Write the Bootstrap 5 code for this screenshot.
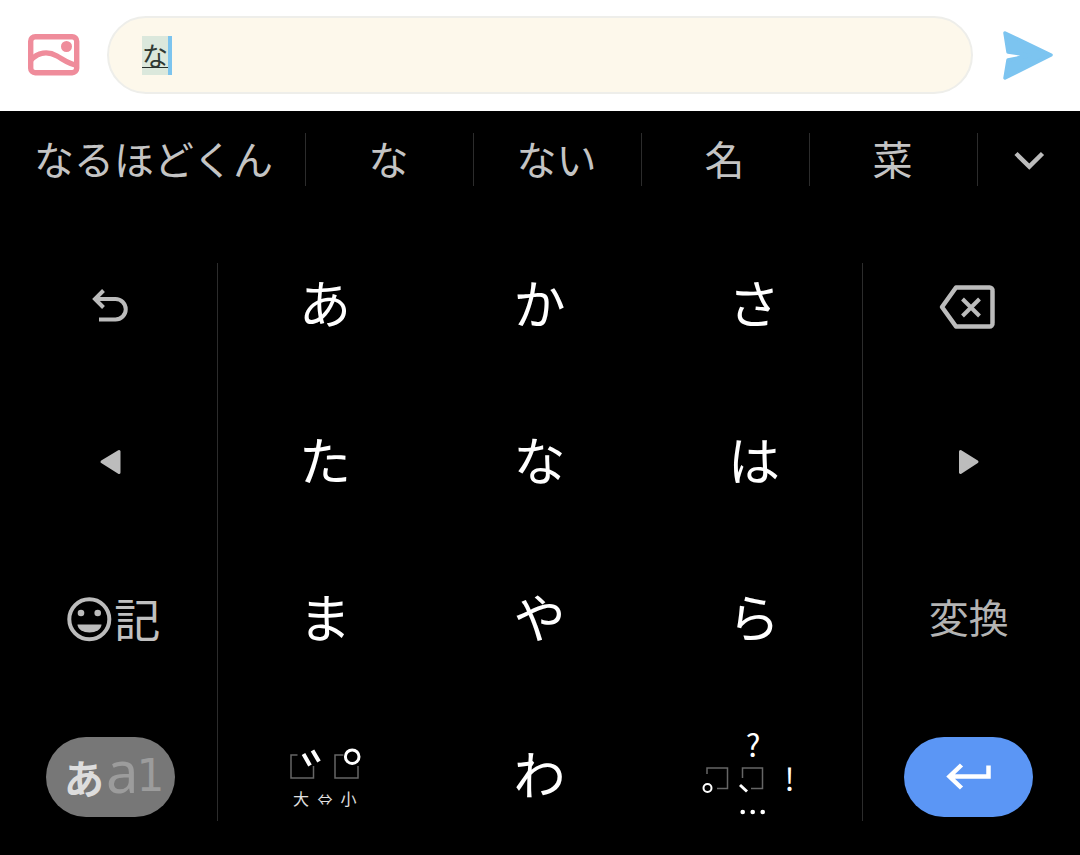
<!doctype html>
<html lang="ja">
<head>
<meta charset="utf-8">
<title>Keyboard</title>
<link href="https://cdn.jsdelivr.net/npm/bootstrap@5.3.0/dist/css/bootstrap.min.css" rel="stylesheet">
<style>
html,body{height:855px;overflow:hidden;background:#000;}
body{font-family:"Noto Sans CJK JP","Noto Sans",sans-serif;}
svg{display:block;flex:none;overflow:visible;}
.top-bar{height:111px;background:#fff;padding:16px 27px 17px 26px;}
.msg-pill{height:78px;margin:0 30px 0 27px;padding-left:33px;background:#fdf8eb;border:2px solid #eeeeea;border-radius:39px;}
.compose{display:block;height:39px;width:26px;background:#dbe8dc;color:#2f3a33;font-size:26px;line-height:37px;text-align:center;}
.compose-under{display:block;height:1.5px;background:#27302b;margin-top:-6px;}
.caret-mark{width:4px;height:39px;background:#7cc4ee;}
.suggest-row{height:115.7px;color:#c4c4c4;font-size:40px;font-weight:400;}
.sug{height:98px;}
.sug-a{width:305px;padding-left:2px;}
.sug-b{width:167px;padding-right:2px;}
.sug-c{flex:1;}
.sug-rule{width:1px;height:53px;background:#2c2c2c;margin:22px 0 0;flex:none;}
.sug-t{line-height:1;margin-top:-4px;white-space:nowrap;}
.key-wrap{height:628.3px;padding:0 4px 0 3px;}
.key-col{flex:1 1 0;display:grid;grid-template-rows:repeat(4,1fr);min-width:0;}
.key-rule{width:1px;margin:36px -.5px 34px;background:#2c2c2c;flex:none;}
.key-rule-end{margin-left:.5px;margin-right:-1.5px;}
.mid-block{flex:3 1 0;display:grid;grid-template-columns:repeat(3,1fr);grid-template-rows:repeat(4,1fr);min-width:0;}
.ky{display:flex;align-items:center;justify-content:center;min-width:0;}
.ky-main{color:#fff;font-size:52px;line-height:1;padding-bottom:7px;}
.ky-side{color:#b4b4b4;font-size:40px;line-height:1;padding-bottom:6px;}
.ky-emoji{padding-left:6px;}
.ki{color:#c0c0c0;font-size:46px;line-height:1;margin-top:-4px;margin-left:2px;}
.pill-key{width:129px;height:80px;border-radius:40px;margin-top:2px;}
.pill-mode{background:#777;line-height:1;padding-left:8px;}
.mode-a{color:#ddd;font-size:40px;font-weight:700;margin-right:2px;}
.mode-b{color:#9c9c9c;font-family:"Noto Sans",sans-serif;font-weight:400;font-size:58px;margin-top:-12px;}
.mode-c{color:#9c9c9c;font-family:"DejaVu Sans",sans-serif;font-weight:400;font-size:44px;margin-top:-2px;margin-left:-2px;}
.pill-enter{background:#5b96f5;}
.svg-txt{font-family:"Noto Sans CJK JP",sans-serif;}
</style>
</head>
<body>
<div class="top-bar d-flex align-items-center">
  <svg width="54" height="44" viewBox="26 34 54 44" aria-label="image">
    <rect x="30.700" y="37.700" width="46" height="36" rx="4.500" fill="none" stroke="#ef8c9b" stroke-width="5.400"/>
    <path d="M30 62C38 53 48 52 57 57C64 61 70 66 77 66" fill="none" stroke="#ef8c9b" stroke-width="5.400"/>
    <circle cx="66.500" cy="47.500" r="5.500" fill="#ef8c9b"/>
  </svg>
  <div class="msg-pill flex-grow-1 d-flex align-items-center">
    <span class="compose">な<span class="compose-under"></span></span><span class="caret-mark"></span>
  </div>
  <svg width="50" height="50" viewBox="1003 30 50 50" aria-label="send">
    <path d="M1005 33L1051 55L1005 78L1008 60L1030 55.500L1008 52Z" fill="#7cc4f0" stroke="#7cc4f0" stroke-width="3.500" stroke-linejoin="round"/>
  </svg>
</div>

<div class="suggest-row d-flex">
  <div class="sug sug-a d-flex align-items-center justify-content-center"><span class="sug-t">なるほどくん</span></div>
  <div class="sug-rule"></div>
  <div class="sug sug-b d-flex align-items-center justify-content-center"><span class="sug-t">な</span></div>
  <div class="sug-rule"></div>
  <div class="sug sug-b d-flex align-items-center justify-content-center"><span class="sug-t">ない</span></div>
  <div class="sug-rule"></div>
  <div class="sug sug-b d-flex align-items-center justify-content-center"><span class="sug-t">名</span></div>
  <div class="sug-rule"></div>
  <div class="sug sug-b d-flex align-items-center justify-content-center"><span class="sug-t">菜</span></div>
  <div class="sug-rule"></div>
  <div class="sug sug-c d-flex align-items-center justify-content-center">
    <svg width="32" height="18" viewBox="1013 151 32 18" aria-label="more"><path d="M1016 153.500L1029.300 166.500L1042.500 153.500" fill="none" stroke="#bcbcbc" stroke-width="4.500"/></svg>
  </div>
</div>

<div class="key-wrap d-flex">
  <div class="key-col">
    <div class="ky">
      <svg width="40" height="40" viewBox="91 285 40 40" aria-label="undo"><path d="M104.500 290.500L96 299L104.500 307.500M96 299H116.500A10 10 0 0 1 116.500 319.500H100" fill="none" stroke="#bcbcbc" stroke-width="4"/></svg>
    </div>
    <div class="ky">
      <svg width="24" height="28" viewBox="98 448 24 28" aria-label="left"><path d="M102 461.700L119 451.500V472.500Z" fill="#bcbcbc" stroke="#bcbcbc" stroke-width="3" stroke-linejoin="round"/></svg>
    </div>
    <div class="ky ky-emoji">
      <svg width="46" height="46" viewBox="65 596 46 46" aria-label="emoji"><circle cx="88.300" cy="619.300" r="20" fill="none" stroke="#bcbcbc" stroke-width="4"/><circle cx="80" cy="613" r="3.300" fill="#bcbcbc"/><circle cx="96.700" cy="613" r="3.300" fill="#bcbcbc"/><path d="M76.500 624.500H100.500A12 8 0 0 1 76.500 624.500Z" fill="#bcbcbc"/></svg>
      <span class="ki">記</span>
    </div>
    <div class="ky">
      <div class="pill-key pill-mode d-flex align-items-center justify-content-center"><span class="mode-a">あ</span><span class="mode-b">a</span><span class="mode-c">1</span></div>
    </div>
  </div>
  <div class="key-rule"></div>
  <div class="mid-block">
    <div class="ky ky-main">あ</div><div class="ky ky-main">か</div><div class="ky ky-main">さ</div>
    <div class="ky ky-main">た</div><div class="ky ky-main">な</div><div class="ky ky-main">は</div>
    <div class="ky ky-main">ま</div><div class="ky ky-main">や</div><div class="ky ky-main">ら</div>
    <div class="ky">
      <svg width="100" height="100" viewBox="274.500 725 100 100" aria-label="dakuten">
        <path d="M297 754H290.500V777H313V765M343 754H334.500V777H357.500V765" fill="none" stroke="#666" stroke-width="1.500"/>
        <path d="M303 753L309.500 764.500M312 749.500L318.500 760.500" stroke="#fff" stroke-width="4"/>
        <circle cx="351.700" cy="755.700" r="6.800" fill="none" stroke="#fff" stroke-width="3"/>
        <text class="svg-txt" x="300.500" y="804" fill="#e0e0e0" font-size="16" text-anchor="middle">大</text>
        <text class="svg-txt" x="324.500" y="804" fill="#e0e0e0" font-size="15" text-anchor="middle">⇔</text>
        <text class="svg-txt" x="348" y="804" fill="#e0e0e0" font-size="16" text-anchor="middle">小</text>
      </svg>
    </div>
    <div class="ky ky-main">わ</div>
    <div class="ky">
      <svg width="100" height="100" viewBox="704 725 100 100" aria-label="punctuation">
        <path d="M707 773V767H727.500V787.500H717M742.500 777V767H762.500V787.500H751" fill="none" stroke="#666" stroke-width="1.500"/>
        <circle cx="707.500" cy="787" r="4" fill="none" stroke="#fff" stroke-width="2"/>
        <path d="M740 784L747 790.500" stroke="#fff" stroke-width="3"/>
        <text class="svg-txt" x="753" y="756" fill="#fff" font-size="31" text-anchor="middle">?</text>
        <text class="svg-txt" x="789.500" y="790" fill="#fff" font-size="31" text-anchor="middle">!</text>
        <circle cx="742.700" cy="811" r="2.300" fill="#fff"/><circle cx="752.700" cy="811" r="2.300" fill="#fff"/><circle cx="762.700" cy="811" r="2.300" fill="#fff"/>
      </svg>
    </div>
  </div>
  <div class="key-rule key-rule-end"></div>
  <div class="key-col">
    <div class="ky">
      <svg width="60" height="48" viewBox="939 281 60 48" aria-label="backspace"><path d="M956 287.500H989A3 3 0 0 1 992.500 291V323A3 3 0 0 1 989 326.500H956L942 307Z" fill="none" stroke="#bcbcbc" stroke-width="4.500" stroke-linejoin="round"/><path d="M962.500 299L979.500 316M979.500 299L962.500 316" stroke="#bcbcbc" stroke-width="4"/></svg>
    </div>
    <div class="ky">
      <svg width="24" height="28" viewBox="957 448 24 28" aria-label="right"><path d="M960.500 451.500L977 461.700L960.500 472.500Z" fill="#bcbcbc" stroke="#bcbcbc" stroke-width="3" stroke-linejoin="round"/></svg>
    </div>
    <div class="ky ky-side">変換</div>
    <div class="ky">
      <div class="pill-key pill-enter d-flex align-items-center justify-content-center">
        <svg width="46" height="30" viewBox="946 764 46 30" aria-label="enter"><path d="M961.500 767L949.500 778.500L961.500 790M949.500 778.500H988.500V767.500" fill="none" stroke="#fff" stroke-width="4.500"/></svg>
      </div>
    </div>
  </div>
</div>
<script src="https://cdn.jsdelivr.net/npm/bootstrap@5.3.0/dist/js/bootstrap.bundle.min.js"></script>
</body>
</html>
